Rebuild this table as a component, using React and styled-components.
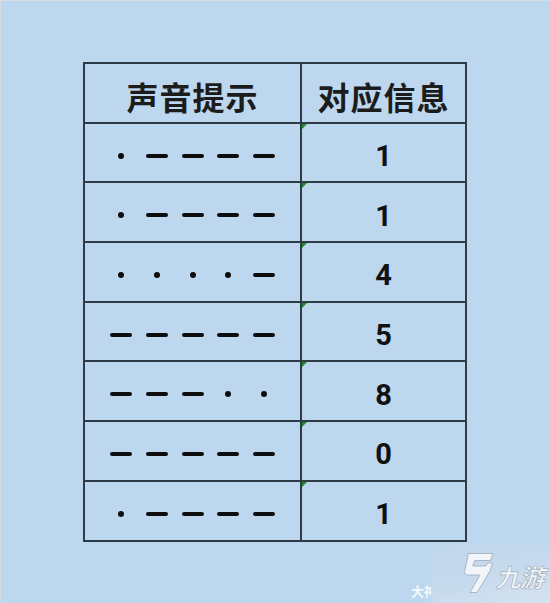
import React from "react";
import styled, { createGlobalStyle } from "styled-components";

const GlobalStyle = createGlobalStyle`
  html, body {
    margin: 0;
    padding: 0;
    background: #bdd7ee;
  }
`;

const Page = styled.div`
  position: relative;
  width: 550px;
  height: 603px;
  box-sizing: border-box;
  background: #bdd7ee;
  border-top: 1px solid #d6dde5;
  border-left: 1px solid #d6dde5;
  padding: 61px 0 0 82px;
  overflow: hidden;
`;

const Table = styled.div`
  display: grid;
  grid-template-columns: 217px 165px;
  grid-auto-rows: 59.7px;
  width: 384px;
  box-sizing: border-box;
  border-top: 2px solid #303b48;
  border-left: 2px solid #303b48;
`;

const Cell = styled.div`
  position: relative;
  display: flex;
  align-items: center;
  justify-content: center;
  box-sizing: border-box;
  border-right: 2px solid #303b48;
  border-bottom: 2px solid #303b48;
  padding-top: ${(p) => p.$shift || 0}px;
`;

const HeadText = styled.span`
  font-family: "Noto Sans CJK SC", "Noto Sans", sans-serif;
  font-weight: 700;
  font-size: 32px;
  line-height: 1;
  color: #1c1c1c;
  letter-spacing: 1px;
`;

const Digit = styled.span`
  font-family: Roboto, "Liberation Sans", sans-serif;
  font-weight: 700;
  font-size: 29px;
  line-height: 1;
  color: #111;
`;

const Code = styled.div`
  display: flex;
  align-items: center;
`;

const Slot = styled.div`
  width: 35.6px;
  display: flex;
  justify-content: center;
  align-items: center;
`;

const Dot = styled.span`
  width: 6px;
  height: 6px;
  border-radius: 50%;
  background: #0d0d0d;
`;

const Dash = styled.span`
  width: 22px;
  height: 4px;
  border-radius: 2px;
  background: #0d0d0d;
`;

const Flag = styled.span`
  position: absolute;
  top: 0;
  left: 0;
  width: 0;
  height: 0;
  border-top: 5px solid #1e8a2a;
  border-right: 5px solid transparent;
`;

const Mark = styled.div`
  position: absolute;
  left: 430px;
  top: 544px;
  width: 120px;
  height: 59px;
  display: flex;
  align-items: center;
  gap: 4px;
  padding: 0 0 4px 31px;
  box-sizing: border-box;
  background: linear-gradient(165deg, #c1d7eb 0%, #c6daed 50%, #d6e3f0 100%);
`;

const MarkText = styled.span`
  font-family: "Noto Sans CJK SC", sans-serif;
  font-weight: 700;
  font-size: 25px;
  line-height: 1;
  color: #f2f6fa;
  -webkit-text-stroke: 0.7px #a3b0bd;
  transform: skewX(-14deg);
  margin-top: 8px;
  letter-spacing: -1px;
`;

const Author = styled.span`
  position: absolute;
  left: 410px;
  top: 580px;
  font-family: "Noto Sans CJK SC", sans-serif;
  font-weight: 700;
  font-size: 13px;
  color: #f5f8fb;
`;

const rows = [
  [".----", "1"],
  [".----", "1"],
  ["....-", "4"],
  ["-----", "5"],
  ["---..", "8"],
  ["-----", "0"],
  [".----", "1"],
];

function Morse({ code }) {
  return (
    <Code>
      {code.split("").map((c, i) => (
        <Slot key={i}>{c === "." ? <Dot /> : <Dash />}</Slot>
      ))}
    </Code>
  );
}

function NineLogo() {
  return (
    <svg width="32" height="42" viewBox="0 0 32 42">
      <path
        d="M6 1.5 H31 L28.5 8.5 H12.5 L10.8 14 H24 L26 11 H30.5 L28 19 L15 40.5 H8 L18 23 H6.5 C3.5 23 2 21 2.8 18.5 L6 4 C6.2 2.5 6 1.5 6 1.5 Z"
        fill="#f2f6fa"
        stroke="#a3b0bd"
        strokeWidth="0.9"
        strokeLinejoin="round"
      />
    </svg>
  );
}

export default function App() {
  return (
    <>
      <GlobalStyle />
      <Page>
        <Table>
          <Cell $shift={6}>
            <HeadText>声音提示</HeadText>
          </Cell>
          <Cell $shift={6}>
            <HeadText>对应信息</HeadText>
          </Cell>
          {rows.map(([code, num], i) => (
            <React.Fragment key={i}>
              <Cell $shift={6}>
                <Morse code={code} />
              </Cell>
              <Cell $shift={8}>
                <Flag />
                <Digit>{num}</Digit>
              </Cell>
            </React.Fragment>
          ))}
        </Table>
        <Author>大神</Author>
        <Mark>
          <NineLogo />
          <MarkText>九游</MarkText>
        </Mark>
      </Page>
    </>
  );
}
